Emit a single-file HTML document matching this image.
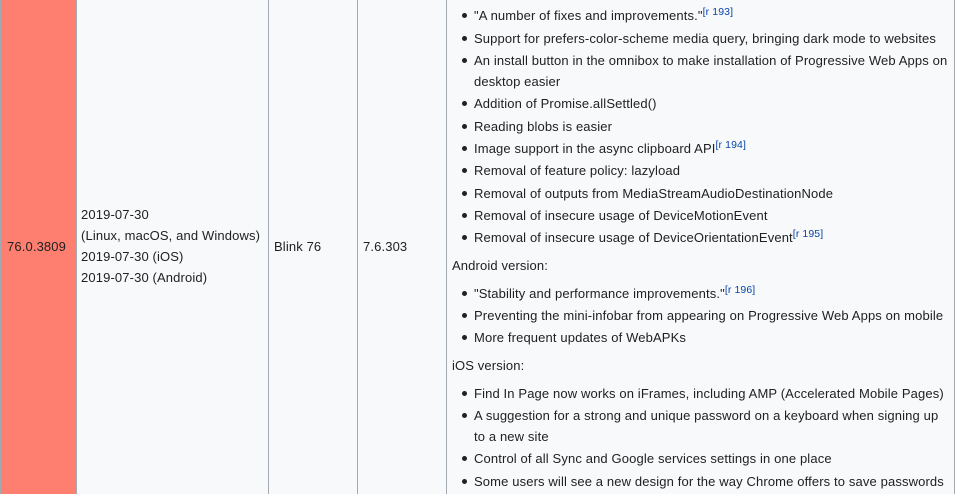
<!DOCTYPE html>
<html><head><meta charset="utf-8"><style>
html,body{margin:0;padding:0;width:957px;height:494px;overflow:hidden;background:#fff}
body{position:relative;font-family:"Liberation Sans",Arial,sans-serif;font-size:13px;letter-spacing:.13px;color:#202122}
.bg{position:absolute;left:0;top:0;width:955px;height:494px;background:#f8f9fa}
.red{position:absolute;left:0;top:0;width:76px;height:494px;background:#fe7f6f}
.v{position:absolute;top:0;width:1px;height:494px;background:#a2a9b1}
.t{position:absolute;line-height:20px;height:20px;white-space:nowrap;margin-top:1px}
.l{left:474px}
.d{position:absolute;left:462px;width:5px;height:5px;border-radius:50%;background:#202122}
sup{font-size:10.5px;letter-spacing:.1px;line-height:0;color:#0645ad;vertical-align:baseline;position:relative;top:-5.5px}
</style></head><body>
<div class="bg"></div><div class="red"></div>
<div class="v" style="left:0"></div><div class="v" style="left:76px"></div><div class="v" style="left:268px"></div><div class="v" style="left:357px"></div><div class="v" style="left:446px"></div><div class="v" style="left:954px"></div>

<div class="t" style="left:7px;top:236px">76.0.3809</div>
<div class="t" style="left:81px;top:204px">2019-07-30</div>
<div class="t" style="left:81px;top:225px">(Linux, macOS, and Windows)</div>
<div class="t" style="left:81px;top:246px">2019-07-30 (iOS)</div>
<div class="t" style="left:81px;top:267px">2019-07-30 (Android)</div>
<div class="t" style="left:274px;top:236px">Blink 76</div>
<div class="t" style="left:363px;top:236px">7.6.303</div>

<div class="d" style="top:13px"></div><div class="t l" style="top:5px">"A number of fixes and improvements."<sup>[r 193]</sup></div>
<div class="d" style="top:36px"></div><div class="t l" style="top:28px">Support for prefers-color-scheme media query, bringing dark mode to websites</div>
<div class="d" style="top:58px"></div><div class="t l" style="top:50px">An install button in the omnibox to make installation of Progressive Web Apps on</div>
<div class="t l" style="top:71px">desktop easier</div>
<div class="d" style="top:101px"></div><div class="t l" style="top:93px">Addition of Promise.allSettled()</div>
<div class="d" style="top:124px"></div><div class="t l" style="top:116px">Reading blobs is easier</div>
<div class="d" style="top:146px"></div><div class="t l" style="top:138px">Image support in the async clipboard API<sup>[r 194]</sup></div>
<div class="d" style="top:168px"></div><div class="t l" style="top:160px">Removal of feature policy: lazyload</div>
<div class="d" style="top:191px"></div><div class="t l" style="top:183px">Removal of outputs from MediaStreamAudioDestinationNode</div>
<div class="d" style="top:213px"></div><div class="t l" style="top:205px">Removal of insecure usage of DeviceMotionEvent</div>
<div class="d" style="top:235px"></div><div class="t l" style="top:227px">Removal of insecure usage of DeviceOrientationEvent<sup>[r 195]</sup></div>
<div class="t" style="left:452px;top:255px">Android version:</div>
<div class="d" style="top:291px"></div><div class="t l" style="top:283px">"Stability and performance improvements."<sup>[r 196]</sup></div>
<div class="d" style="top:313px"></div><div class="t l" style="top:305px">Preventing the mini-infobar from appearing on Progressive Web Apps on mobile</div>
<div class="d" style="top:335px"></div><div class="t l" style="top:327px">More frequent updates of WebAPKs</div>
<div class="t" style="left:452px;top:355px">iOS version:</div>
<div class="d" style="top:391px"></div><div class="t l" style="top:383px">Find In Page now works on iFrames, including AMP (Accelerated Mobile Pages)</div>
<div class="d" style="top:413px"></div><div class="t l" style="top:405px">A suggestion for a strong and unique password on a keyboard when signing up</div>
<div class="t l" style="top:426px">to a new site</div>
<div class="d" style="top:456px"></div><div class="t l" style="top:448px">Control of all Sync and Google services settings in one place</div>
<div class="d" style="top:479px"></div><div class="t l" style="top:471px">Some users will see a new design for the way Chrome offers to save passwords</div>
</body></html>
